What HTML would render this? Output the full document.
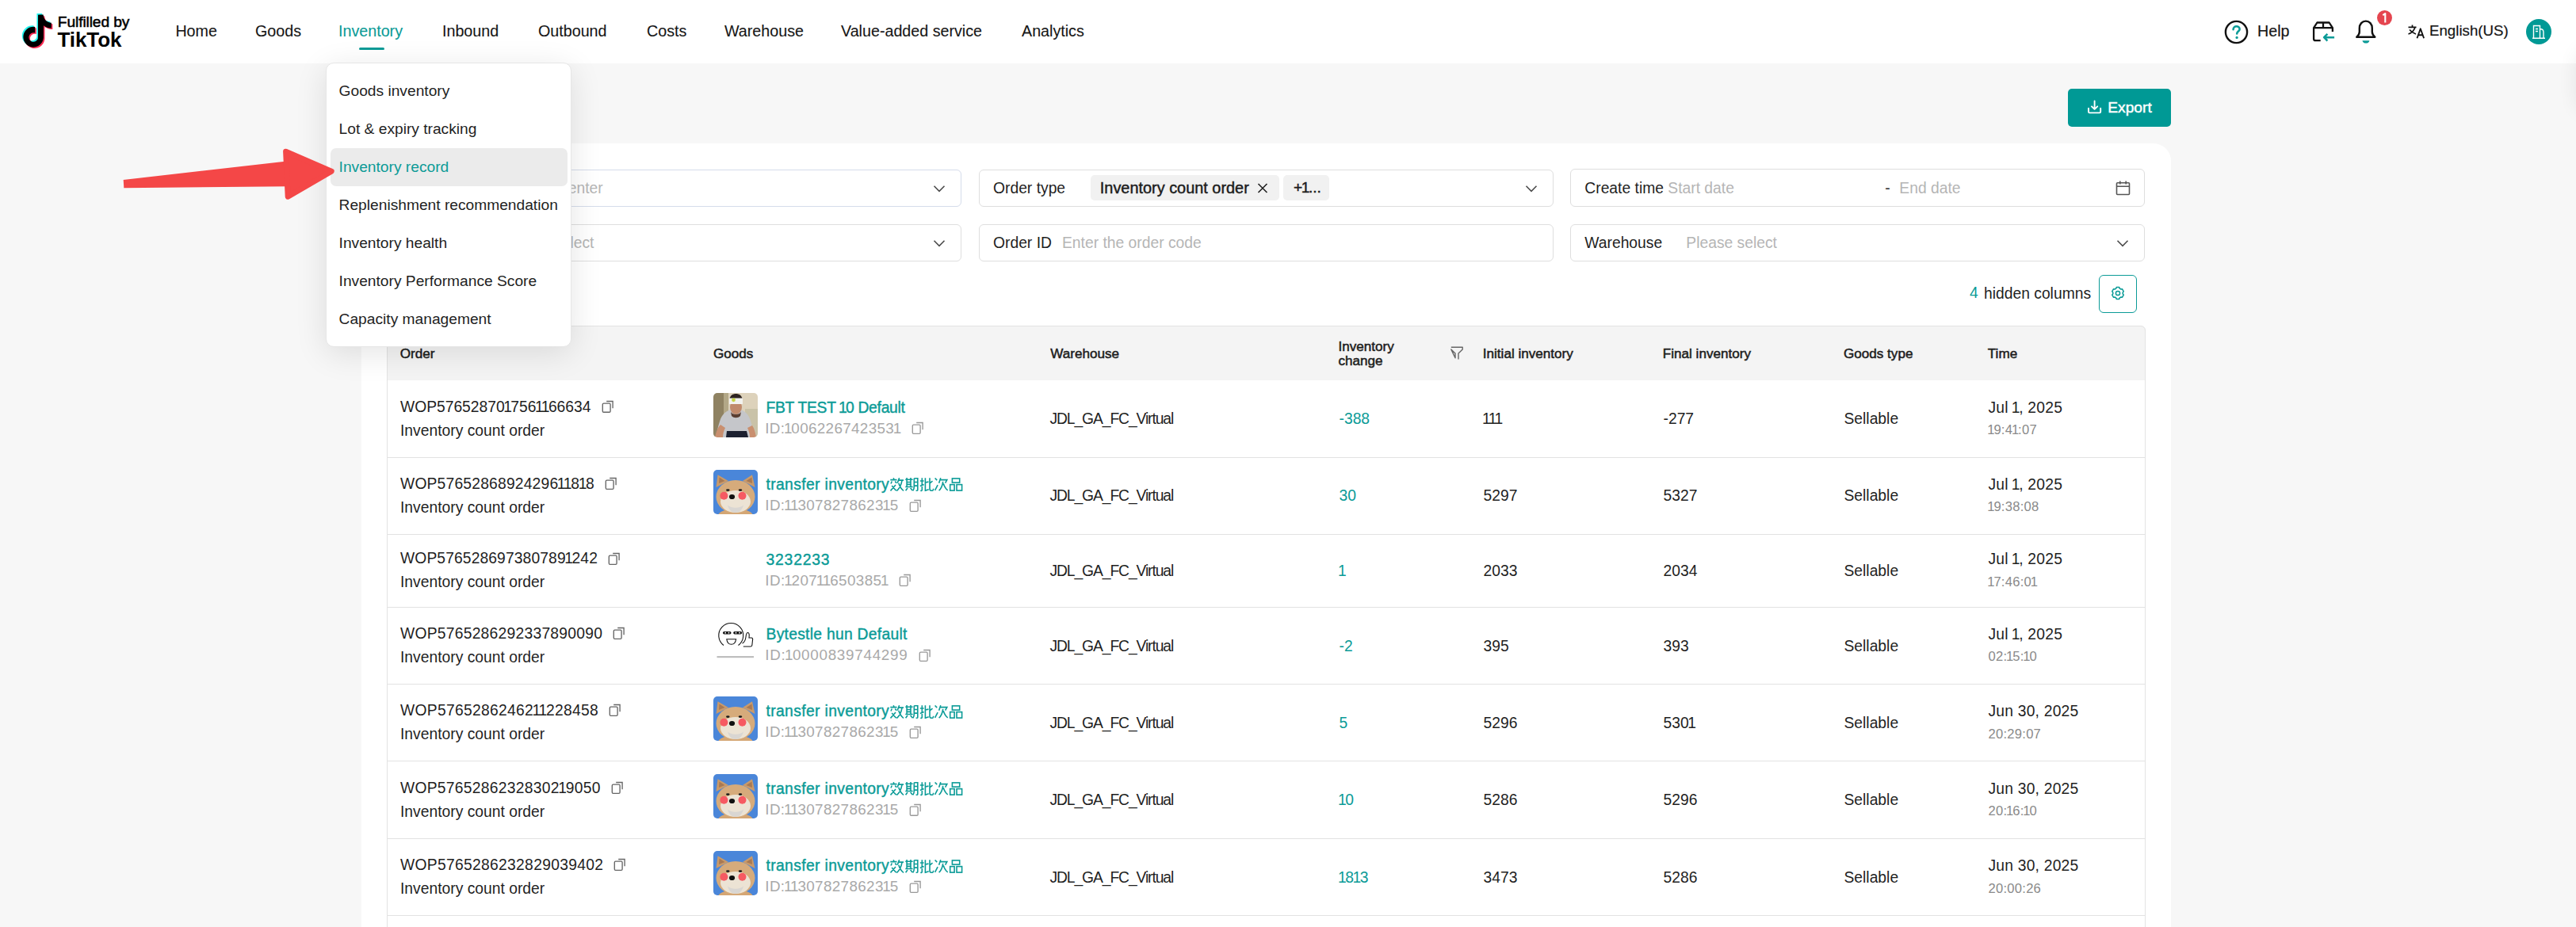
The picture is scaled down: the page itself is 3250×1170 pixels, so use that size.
<!DOCTYPE html>
<html><head><meta charset="utf-8">
<style>
*{box-sizing:border-box;margin:0;padding:0}
html,body{width:3250px;height:1170px;overflow:hidden}
body{background:#f7f7f7;font-family:"Liberation Sans",sans-serif;color:#1f1f1f;position:relative}
.a{position:absolute}
.t{position:absolute;white-space:nowrap;line-height:1}
#hdr{position:absolute;left:0;top:0;width:3250px;height:80px;background:#fff}
.nav{position:absolute;top:30.2px;font-size:19.7px;line-height:1;white-space:nowrap;color:#161616;-webkit-text-stroke:0.1px #161616}
.teal{color:#0b9b97}
#card{position:absolute;left:456px;top:181px;width:2283px;height:1200px;background:#fff;border-radius:22px}
.inp{position:absolute;height:47px;border:1.3px solid #dedede;border-radius:6px;background:#fff}
.inp .lab{position:absolute;top:0.6px;line-height:inherit;font-size:19.3px;color:#1f1f1f;white-space:nowrap}
.inp .ph{position:absolute;top:0.6px;line-height:inherit;font-size:19.3px;color:#b5b5b5;white-space:nowrap}
.chev{position:absolute;width:14px;height:9px}
#tbl{position:absolute;left:488px;top:411px;width:2219px;height:800px;border-radius:6px 6px 0 0;overflow:hidden}
#tblb{position:absolute;left:488px;top:411px;width:2219px;height:900px;border:1.3px solid #e3e3e3;border-radius:6px 6px 0 0}
#th{position:absolute;left:0;top:0;width:100%;height:69px;background:#f4f4f4}
.hd{position:absolute;top:1px;font-weight:normal;font-size:17.1px;line-height:69px;white-space:nowrap;color:#1c1c1c;-webkit-text-stroke:0.5px #1c1c1c}
.row{position:absolute;left:0;width:100%;border-bottom:1.3px solid #e2e2e2}
.c{position:absolute;white-space:nowrap;font-size:19.3px;line-height:1}
.menu{position:absolute;left:411.2px;top:78.7px;width:310px;height:359.5px;background:#fff;border:1px solid #e6e6e6;border-radius:10px;box-shadow:0 8px 40px rgba(0,0,0,0.11)}
.mi{position:absolute;left:15.4px;font-size:19.2px;line-height:1;white-space:nowrap;color:#1f1f1f}
.img{position:absolute;width:56px;height:56px;border-radius:5px;overflow:hidden}
</style></head><body>
<div id="hdr">
<svg class="a" style="left:0px;top:0px" width="80" height="70" viewBox="0 0 80 70">
<g transform="translate(26.7,18.6) scale(1.7)">
<path fill="#25f4ee" transform="translate(-0.9,-0.9)" d="M12.525.02c1.31-.02 2.61-.01 3.91-.02.08 1.530.63 3.090 1.75 4.170 1.12 1.11 2.7 1.62 4.24 1.79v4.03c-1.44-.05-2.89-.35-4.2-.97-.57-.26-1.1-.59-1.62-.93-.01 2.920.01 5.840-.02 8.750-.08 1.4-.54 2.79-1.35 3.94-1.31 1.92-3.58 3.17-5.91 3.21-1.43.08-2.86-.31-4.080-1.030-2.020-1.190-3.440-3.370-3.650-5.710-.02-.5-.03-1-.01-1.490.18-1.9 1.12-3.72 2.58-4.96 1.66-1.44 3.98-2.13 6.15-1.720.02 1.480-.04 2.960-.04 4.440-.99-.32-2.150-.23-3.020.37-.63.41-1.110 1.040-1.360 1.750-.21.51-.15 1.070-.14 1.610.24 1.640 1.820 3.020 3.500 2.870 1.120-.01 2.190-.66 2.770-1.610.19-.33.4-.67.41-1.060.1-1.790.06-3.570.07-5.360.01-4.030-.01-8.050.02-12.070z"/>
<path fill="#fe2c55" transform="translate(0.9,0.9)" d="M12.525.02c1.31-.02 2.61-.01 3.91-.02.08 1.530.63 3.090 1.75 4.170 1.12 1.11 2.7 1.62 4.24 1.79v4.03c-1.44-.05-2.89-.35-4.2-.97-.57-.26-1.1-.59-1.62-.93-.01 2.920.01 5.840-.02 8.750-.08 1.4-.54 2.79-1.35 3.94-1.31 1.92-3.58 3.17-5.91 3.21-1.43.08-2.86-.31-4.080-1.030-2.020-1.190-3.440-3.370-3.650-5.710-.02-.5-.03-1-.01-1.490.18-1.9 1.12-3.72 2.58-4.96 1.66-1.44 3.98-2.13 6.15-1.720.02 1.480-.04 2.960-.04 4.440-.99-.32-2.150-.23-3.020.37-.63.41-1.110 1.040-1.360 1.750-.21.51-.15 1.070-.14 1.610.24 1.640 1.820 3.020 3.500 2.870 1.120-.01 2.190-.66 2.770-1.610.19-.33.4-.67.41-1.060.1-1.790.06-3.570.07-5.360.01-4.030-.01-8.050.02-12.070z"/>
<path fill="#000" d="M12.525.02c1.31-.02 2.61-.01 3.91-.02.08 1.530.63 3.090 1.75 4.170 1.12 1.11 2.7 1.62 4.24 1.79v4.03c-1.44-.05-2.89-.35-4.2-.97-.57-.26-1.1-.59-1.62-.93-.01 2.920.01 5.840-.02 8.750-.08 1.4-.54 2.79-1.35 3.94-1.31 1.92-3.58 3.17-5.91 3.21-1.43.08-2.86-.31-4.080-1.030-2.020-1.190-3.440-3.370-3.650-5.710-.02-.5-.03-1-.01-1.490.18-1.9 1.12-3.72 2.58-4.96 1.66-1.44 3.98-2.13 6.150-1.720.02 1.480-.04 2.960-.04 4.440-.99-.32-2.150-.23-3.020.37-.63.41-1.110 1.040-1.360 1.750-.21.51-.15 1.070-.14 1.610.24 1.640 1.820 3.020 3.500 2.870 1.120-.01 2.190-.66 2.770-1.610.19-.33.4-.67.41-1.060.1-1.790.06-3.570.07-5.360.01-4.030-.01-8.050.02-12.070z"/>
</g></svg>
<div class="t" style="left:72.8px;top:17.6px;font-size:19.2px;color:#000;letter-spacing:-0.1px;-webkit-text-stroke:0.55px #000">Fulfilled by</div>
<div class="t" style="left:72.5px;top:37.3px;font-size:26px;font-weight:bold;color:#000;letter-spacing:-0.1px">TikTok</div>
<div class="nav" style="left:221.4px">Home</div>
<div class="nav" style="left:322px">Goods</div>
<div class="nav teal" style="left:427px;color:#0b9b97;-webkit-text-stroke:0.1px #0b9b97">Inventory</div>
<div class="a" style="left:453px;top:60px;width:32px;height:3px;border-radius:2px;background:#0b9b97"></div>
<div class="nav" style="left:558px">Inbound</div>
<div class="nav" style="left:679px">Outbound</div>
<div class="nav" style="left:816px">Costs</div>
<div class="nav" style="left:914px">Warehouse</div>
<div class="nav" style="left:1061px">Value-added service</div>
<div class="nav" style="left:1289px">Analytics</div>
<!-- right -->
<svg class="a" style="left:2805px;top:24px" width="34" height="34" viewBox="0 0 34 34">
<circle cx="16.5" cy="16.5" r="13.6" fill="none" stroke="#111" stroke-width="2.4"/>
<path d="M12.6 13.2c0-2.3 1.8-3.9 4-3.9s4 1.5 4 3.6c0 2.5-3.4 2.9-3.4 5.6" fill="none" stroke="#0b9b97" stroke-width="2.6" stroke-linecap="round"/>
<circle cx="17.1" cy="23.4" r="1.6" fill="#0b9b97"/>
</svg>
<div class="nav" style="left:2848px;top:29.6px;-webkit-text-stroke:0.2px #161616">Help</div>
<svg class="a" style="left:2915px;top:25px" width="34" height="32" viewBox="0 0 34 32">
<path d="M12.7 26.1H6.3c-1.3 0-2.2-.9-2.2-2.2V10.2L8.4 3.5H23.6L27.9 10.2V15" fill="none" stroke="#111" stroke-width="2.3" stroke-linejoin="round"/>
<path d="M4.1 10.2H27.9M16 3.5v6.7" fill="none" stroke="#111" stroke-width="2.3"/>
<path d="M30.1 22.2H17.6M21.4 17.9l-4.3 4.3 4.3 4.3" fill="none" stroke="#0b9b97" stroke-width="2.5" stroke-linejoin="round"/>
</svg>
<svg class="a" style="left:2969px;top:23px" width="32" height="34" viewBox="0 0 32 34">
<path d="M4.2 23.8c2-1.8 3.6-3.6 3.6-6.6v-4.6c0-5.2 3.4-9 8-9s8 3.8 8 9v4.6c0 3 1.6 4.8 3.6 6.6z" fill="none" stroke="#111" stroke-width="2.4" stroke-linejoin="round"/>
<path d="M11.5 28.2h8.9c-.4 2.1-2.2 3.4-4.45 3.4s-4.05-1.3-4.45-3.4z" fill="#0b9b97"/>
</svg>
<div class="a" style="left:2999px;top:12.5px;width:19px;height:19px;border-radius:50%;background:#e5454f"></div>
<svg class="a" style="left:2999px;top:12.5px" width="19" height="19" viewBox="0 0 19 19"><path d="M7.3 6.2l3-2.1v11.3" fill="none" stroke="#fff" stroke-width="2.1" stroke-linejoin="round"/></svg>
<svg class="a" style="left:3037px;top:30px" width="24" height="20" viewBox="0 0 24 20">
<path d="M1.5 4.3h10M6.5 1.5v2.8M3 7.5c2.5 3 5 4.5 8 5.5M10 4.5c-1.5 4.2-4 7-8.5 8.5" fill="none" stroke="#111" stroke-width="1.7"/>
<path d="M12.5 18.3l4.3-12 4.3 12M14 14.3h5.6" fill="none" stroke="#111" stroke-width="1.9" stroke-linejoin="round"/>
</svg>
<div class="nav" style="left:3065px;top:30px;font-size:18.7px;-webkit-text-stroke:0.2px #161616">English(US)</div>
<div class="a" style="left:3187px;top:24px;width:32px;height:32px;border-radius:50%;background:#009995"></div>
<svg class="a" style="left:3187px;top:24px" width="32" height="32" viewBox="0 0 32 32">
<path d="M9.5 24V8.5h8V24M17.5 12.5c2.5 0 4.5 1.5 4.5 4V24M8 24.3h16M12 12.5h3M12 15.5h3" fill="none" stroke="#fff" stroke-width="1.4"/>
</svg>
</div>
<div class="a" style="left:2609px;top:112px;width:130px;height:48px;border-radius:5px;background:#009995"></div>
<svg class="a" style="left:2632px;top:126px" width="21" height="20" viewBox="0 0 21 20">
<path d="M10.6 1.5v10.3M7 8.3l3.6 3.6 3.6-3.6" fill="none" stroke="#fff" stroke-width="1.9" stroke-linecap="round" stroke-linejoin="round"/>
<path d="M3 10.8v4.3c0 .8.5 1.3 1.3 1.3h12.6c.8 0 1.3-.5 1.3-1.3v-4.3" fill="none" stroke="#fff" stroke-width="1.9" stroke-linecap="round"/>
</svg>
<div class="t" style="left:2659.3px;top:120.6px;font-size:19.2px;color:#fff;line-height:30px;-webkit-text-stroke:0.45px #fff">Export</div>
<div id="card"></div>
<div class="inp" style="left:488px;top:214px;width:725px;height:47.3px;line-height:44.7px;border-color:#d5dceb"><div class="lab" style="left:16px">SKU ID</div><div class="ph" style="left:163.5px">Please enter</div></div>
<svg class="a" style="left:1177px;top:233px" width="16" height="11" viewBox="0 0 16 11"><path d="M1.5 1.8l6.5 6.5 6.5-6.5" fill="none" stroke="#4a4a4a" stroke-width="1.55"/></svg>
<div class="inp" style="left:488px;top:283px;width:725px;height:47.3px;line-height:44.7px"><div class="lab" style="left:16px">Goods type</div><div class="ph" style="left:145.8px">Please select</div></div>
<svg class="a" style="left:1177px;top:302px" width="16" height="11" viewBox="0 0 16 11"><path d="M1.5 1.8l6.5 6.5 6.5-6.5" fill="none" stroke="#4a4a4a" stroke-width="1.55"/></svg>
<div class="inp" style="left:1235px;top:214px;width:725px;height:47.3px;line-height:44.7px"><div class="lab" style="left:17px">Order type</div></div>
<div class="a" style="left:1376px;top:221px;width:238px;height:32px;border-radius:5px;background:#f1f1f1"></div>
<div class="t" style="left:1387.8px;top:221px;line-height:32px;font-size:19.9px;color:#1c1c1c;-webkit-text-stroke:0.45px #1c1c1c">Inventory count order</div>
<svg class="a" style="left:1585px;top:230px" width="16" height="15" viewBox="0 0 16 15"><path d="M2.5 2l11 11M13.5 2l-11 11" stroke="#222" stroke-width="1.6"/></svg>
<div class="a" style="left:1619px;top:221px;width:58px;height:32px;border-radius:5px;background:#f1f1f1"></div>
<div class="t" style="left:1632px;top:221px;line-height:32px;font-size:19.2px;color:#1c1c1c;-webkit-text-stroke:0.45px #1c1c1c">+<span style="margin:0 -1.5px">1</span>...</div>
<svg class="a" style="left:1924px;top:233px" width="16" height="11" viewBox="0 0 16 11"><path d="M1.5 1.8l6.5 6.5 6.5-6.5" fill="none" stroke="#4a4a4a" stroke-width="1.55"/></svg>
<div class="inp" style="left:1235px;top:283px;width:725px;height:47.3px;line-height:44.7px"><div class="lab" style="left:17px">Order ID</div><div class="ph" style="left:104px">Enter the order code</div></div>
<div class="inp" style="left:1981.3px;top:213.3px;width:725.2px;height:48px;line-height:45.4px"><div class="lab" style="left:17px">Create time</div><div class="ph" style="left:122px">Start date</div><div class="ph" style="left:396px;color:#333">-</div><div class="ph" style="left:414px">End date</div></div>
<svg class="a" style="left:2668px;top:227px" width="21" height="21" viewBox="0 0 21 21"><rect x="2.5" y="3.8" width="16" height="14.7" rx="1" fill="none" stroke="#555" stroke-width="1.6"/><path d="M2.5 8.3h16M6.8 1.5v4M14.2 1.5v4" stroke="#555" stroke-width="1.6"/></svg>
<div class="inp" style="left:1981.3px;top:283px;width:725.2px;height:47.3px;line-height:44.7px"><div class="lab" style="left:17px">Warehouse</div><div class="ph" style="left:145px">Please select</div></div>
<svg class="a" style="left:2670px;top:302px" width="16" height="11" viewBox="0 0 16 11"><path d="M1.5 1.8l6.5 6.5 6.5-6.5" fill="none" stroke="#4a4a4a" stroke-width="1.55"/></svg>
<div class="t" style="left:2485px;top:360.3px;font-size:19.3px;color:#0b9b97">4</div>
<div class="t" style="left:2503px;top:360.5px;font-size:19.3px;color:#1f1f1f">hidden columns</div>
<div class="a" style="left:2648px;top:347px;width:48px;height:48px;border:1.6px solid #0b9b97;border-radius:6px"></div>
<svg class="a" style="left:2660.7px;top:359.4px" width="22" height="22" viewBox="0 0 22 22"><path d="M9.29 3.59 L12.71 3.59 L13.36 5.16 L14.88 6.04 L16.56 5.82 L18.27 8.78 L17.24 10.12 L17.24 11.88 L18.27 13.22 L16.56 16.18 L14.88 15.96 L13.36 16.84 L12.71 18.41 L9.29 18.41 L8.64 16.84 L7.12 15.96 L5.44 16.18 L3.73 13.22 L4.76 11.88 L4.76 10.12 L3.73 8.78 L5.44 5.82 L7.12 6.04 L8.64 5.16Z" fill="none" stroke="#0b9b97" stroke-width="1.55" stroke-linejoin="round"/><circle cx="11" cy="11" r="2.6" fill="none" stroke="#0b9b97" stroke-width="1.5"/></svg>

<div id="tbl">
<div id="th">
<div class="hd" style="left:16.7px">Order</div>
<div class="hd" style="left:412px">Goods</div>
<div class="hd" style="left:837.3px">Warehouse</div>
<div class="hd" style="left:1200.5px;line-height:17.8px;top:18.2px">Inventory<br>change</div>
<svg class="a" style="left:1339px;top:24.5px" width="22" height="20" viewBox="0 0 22 20"><path d="M3.8 2.3h14.4v2.6l-5.2 5v7.6M9 15.8v-5.9l-5.2-5z" fill="none" stroke="#666" stroke-width="1.4" stroke-linejoin="round"/></svg>
<div class="hd" style="left:1382.8px">Initial inventory</div>
<div class="hd" style="left:1609.8px">Final inventory</div>
<div class="hd" style="left:1838px">Goods type</div>
<div class="hd" style="left:2019.8px">Time</div>
</div>
<div class="row" style="top:69.0px;height:97.5px"><div class="c" style="left:17px;top:23.7px;letter-spacing:-0.02px">WOP57652870<span style="margin:0 -1.5px">1</span>756<span style="margin:0 -1.5px">1</span><span style="margin:0 -1.5px">1</span>66634<svg style="position:absolute;left:100%;margin-left:13.42px;top:1.1px" width="16" height="16" viewBox="0 0 16 16"><path d="M6.2 1.5h7.9v8.7" fill="none" stroke="#666" stroke-width="1.35"/><rect x="1.3" y="4.1" width="9.8" height="11.2" rx="1.3" fill="none" stroke="#666" stroke-width="1.35"/></svg></div><div class="c" style="left:17px;top:53.7px">Inventory count order</div><div class="c" style="left:478.5px;top:24.9px;color:#0b9b97;letter-spacing:-0.27px;-webkit-text-stroke:0.4px #0b9b97">FBT TEST <span style="margin:0 -1.5px">1</span>0 Default</div><div class="c" style="left:477.3px;top:51.9px;font-size:18.85px;letter-spacing:0.334px;color:#a9a9a9">ID:<span style="margin:0 -1.45px">1</span>006226742353<span style="margin:0 -1.45px">1</span><svg style="position:absolute;left:100%;margin-left:13.666px;top:0.6px" width="16" height="16" viewBox="0 0 16 16"><path d="M6.2 1.5h7.9v8.7" fill="none" stroke="#999" stroke-width="1.35"/><rect x="1.3" y="4.1" width="9.8" height="11.2" rx="1.3" fill="none" stroke="#999" stroke-width="1.35"/></svg></div><div class="c" style="left:836.5px;top:39.4px;letter-spacing:-1.1px">JDL_GA_FC_Virtual</div><div class="c" style="left:1201.5px;top:39.4px;color:#0b9b97">-388</div><div class="c" style="left:1383.5px;top:39.4px"><span style="margin:0 -1.5px">1</span><span style="margin:0 -1.5px">1</span><span style="margin:0 -1.5px">1</span></div><div class="c" style="left:1610.5px;top:39.4px">-277</div><div class="c" style="left:1838.5px;top:39.4px">Sellable</div><div class="c" style="left:2020.5px;top:24.6px;letter-spacing:0.2px">Jul <span style="margin:0 -1.5px">1</span>, 2025</div><div class="c" style="left:2020.5px;top:55.3px;font-size:16.6px;letter-spacing:0.25px;color:#8a8a8a"><span style="margin:0 -1.3px">1</span>9:4<span style="margin:0 -1.3px">1</span>:07</div><div class="img" style="left:411.5px;top:16.0px"><svg width="56" height="56" viewBox="0 0 56 56" style="filter:blur(0.5px)">
<rect width="56" height="56" fill="#ddd2bb"/>
<rect x="0" y="0" width="17" height="56" fill="#8f8262"/>
<rect x="13" y="0" width="6" height="56" fill="#b3a887"/>
<rect x="40" y="20" width="16" height="36" fill="#c9c2a8"/>
<path d="M4 56c0-6 2-14 4-20 3-10 8-13 14-15h12c6 2 10 5 13 14 2 6 3 14 3 21z" fill="#c5c6ca"/>
<path d="M2 56c1-5 3-12 7-16l6 4c-2 4-3 8-3 12z" fill="#c98f6f"/>
<path d="M54 56c-1-5-2-11-5-15l-6 3c2 4 3 8 3 12z" fill="#c98f6f"/>
<path d="M16 56l1-8h25l2 8z" fill="#1c2030"/>
<ellipse cx="28.5" cy="18" rx="7.5" ry="9" fill="#c08a6c"/>
<path d="M22 24c2 4 11 4 13 0l-1 5c-3 3-8 3-11 0z" fill="#5a3f33"/>
<path d="M20.5 7c1-4 4-6 8-6s7 2 8 6z" fill="#2e2420"/>
<path d="M20 6.5h17v7.5h-17z" fill="#f2f2ee"/>
<circle cx="25.5" cy="8.8" r="2.4" fill="#c7d645"/>
</svg></div></div><div class="row" style="top:166.2px;height:97.4px"><div class="c" style="left:17px;top:23.6px;letter-spacing:0.186px">WOP57652868924296<span style="margin:0 -1.5px">1</span><span style="margin:0 -1.5px">1</span>8<span style="margin:0 -1.5px">1</span>8<svg style="position:absolute;left:100%;margin-left:13.214px;top:1.1px" width="16" height="16" viewBox="0 0 16 16"><path d="M6.2 1.5h7.9v8.7" fill="none" stroke="#666" stroke-width="1.35"/><rect x="1.3" y="4.1" width="9.8" height="11.2" rx="1.3" fill="none" stroke="#666" stroke-width="1.35"/></svg></div><div class="c" style="left:17px;top:53.6px">Inventory count order</div><div class="c" style="left:478.5px;top:24.8px;color:#0b9b97;letter-spacing:0.37px;-webkit-text-stroke:0.4px #0b9b97">transfer inventory<svg style="position:absolute;left:100%;margin-left:1.0px;top:1.4px" width="92" height="18" viewBox="0 0 92 18"><g fill="none" stroke="#0b9b97" stroke-width="1.6"><path d="M4.2 0.3L4.9 2M0.3 2.6H8.5M2.3 4.5L1 7.5M6.3 4.5L8 6.8M7 9L0.5 16.5M2.2 10L7.5 16.3M11.6 0.2L9.2 6.6M10.3 3.1H17M15 3.6C14 9 12 13.5 8.2 16.5M10.8 6.8C12 11 14.5 14.5 17 16.5"/><path d="M21.1 0V11.5M26 0V11.5M19.3 2.2H28.6M21.1 5.5H26M21.1 8.4H26M19.3 11.5H28.6M22 13L19.6 16.3M25.6 13L28.5 16.3M30.3 0.7V11C30.3 13.5 29.8 15 28.9 16.3M30.3 0.7H34.8V15.2C34.8 16 34.3 16.3 33.5 16.3H32.6M30.3 5.5H34.8M30.3 10.1H34.8"/><path d="M37.8 4H42.6M40.3 0.2V15.2C40.3 16.2 39.5 16.5 38.3 16.3M37.8 10.4L42.6 8.4M44.4 0.2V16.3M44.4 6L48.5 5.1M43.6 16.4L48.7 14.8M50 0.2V14C50 15.8 50.6 16.2 52 16.2H53.5C54.3 16.2 54.5 15.5 54.6 13.8M53.5 4.2L50.2 6.8"/><path d="M56.6 0.5L59.2 3.1M56.6 15.8L60.1 9.1M63.8 0.2L61.6 6.7M62.5 2.6H71.8L69.6 6.6M66.7 4.9C66 10 64.5 13.8 61.6 16.2M67.2 7.2C68.5 11 70 14 72.8 15.8"/><rect x="78.4" y="0.9" width="9.3" height="5.2"/><rect x="75.7" y="8.6" width="5.4" height="7.5"/><rect x="84" y="8.6" width="6.6" height="7.5"/></g></svg></div><div class="c" style="left:477.3px;top:51.8px;font-size:18.85px;letter-spacing:0.359px;color:#a9a9a9">ID:<span style="margin:0 -1.45px">1</span><span style="margin:0 -1.45px">1</span>3078278623<span style="margin:0 -1.45px">1</span>5<svg style="position:absolute;left:100%;margin-left:13.641px;top:0.6px" width="16" height="16" viewBox="0 0 16 16"><path d="M6.2 1.5h7.9v8.7" fill="none" stroke="#999" stroke-width="1.35"/><rect x="1.3" y="4.1" width="9.8" height="11.2" rx="1.3" fill="none" stroke="#999" stroke-width="1.35"/></svg></div><div class="c" style="left:836.5px;top:39.3px;letter-spacing:-1.1px">JDL_GA_FC_Virtual</div><div class="c" style="left:1201.5px;top:39.3px;color:#0b9b97">30</div><div class="c" style="left:1383.5px;top:39.3px">5297</div><div class="c" style="left:1610.5px;top:39.3px">5327</div><div class="c" style="left:1838.5px;top:39.3px">Sellable</div><div class="c" style="left:2020.5px;top:24.5px;letter-spacing:0.2px">Jul <span style="margin:0 -1.5px">1</span>, 2025</div><div class="c" style="left:2020.5px;top:55.2px;font-size:16.6px;letter-spacing:0.25px;color:#8a8a8a"><span style="margin:0 -1.3px">1</span>9:38:08</div><div class="img" style="left:411.5px;top:15.9px"><svg width="56" height="56" viewBox="0 0 56 56" style="filter:blur(0.4px)">
<rect width="56" height="56" fill="#4a86d9"/>
<path d="M3.5 22L5.5 6.3L19 14z M52.5 22L49 6.3L37 14z" fill="#c99a6a"/>
<path d="M7 17L7.5 9.5L14.5 14z M49 17L48.5 9.5L41.5 14z" fill="#8c5e3f" opacity=".55"/>
<ellipse cx="28" cy="58" rx="22" ry="9" fill="#d4a674"/>
<ellipse cx="28" cy="34" rx="24.5" ry="21" fill="#d6ab7b"/>
<ellipse cx="28" cy="40" rx="19" ry="14" fill="#ece3d4"/>
<path d="M18 44c3 5 17 5 20 0-1 6-5 10-10 10s-9-4-10-10z" fill="#d9d6d2"/>
<ellipse cx="18.3" cy="25.6" rx="2.3" ry="1.3" fill="#1a1a1a"/>
<ellipse cx="34" cy="25.6" rx="2.3" ry="1.3" fill="#1a1a1a"/>
<circle cx="13.4" cy="32.8" r="5" fill="#f65a62"/>
<circle cx="36.5" cy="32.8" r="5" fill="#f65a62"/>
<ellipse cx="23.5" cy="34" rx="3.6" ry="3.1" fill="#111"/>
</svg></div></div><div class="row" style="top:263.3px;height:92.4px"><div class="c" style="left:17px;top:21.2px;letter-spacing:0.1px">WOP576528697380789<span style="margin:0 -1.5px">1</span>242<svg style="position:absolute;left:100%;margin-left:13.3px;top:1.1px" width="16" height="16" viewBox="0 0 16 16"><path d="M6.2 1.5h7.9v8.7" fill="none" stroke="#666" stroke-width="1.35"/><rect x="1.3" y="4.1" width="9.8" height="11.2" rx="1.3" fill="none" stroke="#666" stroke-width="1.35"/></svg></div><div class="c" style="left:17px;top:51.2px">Inventory count order</div><div class="c" style="left:478.5px;top:22.4px;color:#0b9b97;letter-spacing:0.82px;-webkit-text-stroke:0.4px #0b9b97">3232233</div><div class="c" style="left:477.3px;top:49.4px;font-size:18.85px;letter-spacing:0.393px;color:#a9a9a9">ID:<span style="margin:0 -1.45px">1</span>207<span style="margin:0 -1.45px">1</span><span style="margin:0 -1.45px">1</span>650385<span style="margin:0 -1.45px">1</span><svg style="position:absolute;left:100%;margin-left:13.607px;top:0.6px" width="16" height="16" viewBox="0 0 16 16"><path d="M6.2 1.5h7.9v8.7" fill="none" stroke="#999" stroke-width="1.35"/><rect x="1.3" y="4.1" width="9.8" height="11.2" rx="1.3" fill="none" stroke="#999" stroke-width="1.35"/></svg></div><div class="c" style="left:836.5px;top:36.9px;letter-spacing:-1.1px">JDL_GA_FC_Virtual</div><div class="c" style="left:1201.5px;top:36.9px;color:#0b9b97"><span style="margin:0 -1.5px">1</span></div><div class="c" style="left:1383.5px;top:36.9px">2033</div><div class="c" style="left:1610.5px;top:36.9px">2034</div><div class="c" style="left:1838.5px;top:36.9px">Sellable</div><div class="c" style="left:2020.5px;top:22.1px;letter-spacing:0.2px">Jul <span style="margin:0 -1.5px">1</span>, 2025</div><div class="c" style="left:2020.5px;top:52.8px;font-size:16.6px;letter-spacing:0.25px;color:#8a8a8a"><span style="margin:0 -1.3px">1</span>7:46:0<span style="margin:0 -1.3px">1</span></div></div><div class="row" style="top:355.4px;height:97.2px"><div class="c" style="left:17px;top:23.5px;letter-spacing:0.243px">WOP5765286292337890090<svg style="position:absolute;left:100%;margin-left:13.157px;top:1.1px" width="16" height="16" viewBox="0 0 16 16"><path d="M6.2 1.5h7.9v8.7" fill="none" stroke="#666" stroke-width="1.35"/><rect x="1.3" y="4.1" width="9.8" height="11.2" rx="1.3" fill="none" stroke="#666" stroke-width="1.35"/></svg></div><div class="c" style="left:17px;top:53.5px">Inventory count order</div><div class="c" style="left:478.5px;top:24.7px;color:#0b9b97;letter-spacing:0.28px;-webkit-text-stroke:0.4px #0b9b97">Bytestle hun Default</div><div class="c" style="left:477.3px;top:51.7px;font-size:18.85px;letter-spacing:0.72px;color:#a9a9a9">ID:<span style="margin:0 -1.45px">1</span>0000839744299<svg style="position:absolute;left:100%;margin-left:13.28px;top:0.6px" width="16" height="16" viewBox="0 0 16 16"><path d="M6.2 1.5h7.9v8.7" fill="none" stroke="#999" stroke-width="1.35"/><rect x="1.3" y="4.1" width="9.8" height="11.2" rx="1.3" fill="none" stroke="#999" stroke-width="1.35"/></svg></div><div class="c" style="left:836.5px;top:39.2px;letter-spacing:-1.1px">JDL_GA_FC_Virtual</div><div class="c" style="left:1201.5px;top:39.2px;color:#0b9b97">-2</div><div class="c" style="left:1383.5px;top:39.2px">395</div><div class="c" style="left:1610.5px;top:39.2px">393</div><div class="c" style="left:1838.5px;top:39.2px">Sellable</div><div class="c" style="left:2020.5px;top:24.4px;letter-spacing:0.2px">Jul <span style="margin:0 -1.5px">1</span>, 2025</div><div class="c" style="left:2020.5px;top:55.1px;font-size:16.6px;letter-spacing:0.25px;color:#8a8a8a">02:<span style="margin:0 -1.3px">1</span>5:<span style="margin:0 -1.3px">1</span>0</div><div class="img" style="left:411.5px;top:15.8px"><svg width="56" height="56" viewBox="0 0 56 56">
<rect width="56" height="56" fill="#fff"/>
<path d="M13 32.5A15.5 15.5 0 1 1 31.5 32.5" fill="none" stroke="#111" stroke-width="1.1"/>
<rect x="12" y="15" width="10.5" height="3.4" rx="1.7" fill="#111"/>
<rect x="25.2" y="15" width="10.9" height="3.4" rx="1.7" fill="#111"/>
<circle cx="15.2" cy="16.7" r=".9" fill="#fff"/><circle cx="19.5" cy="16.7" r=".9" fill="#fff"/>
<circle cx="28.5" cy="16.7" r=".9" fill="#fff"/><circle cx="33" cy="16.7" r=".9" fill="#fff"/>
<path d="M16.8 24.8h11.8c-.5 4-2.8 6.5-5.9 6.5s-5.4-2.5-5.9-6.5z" fill="none" stroke="#111" stroke-width="1.1"/>
<path d="M36.5 30c2-1 4-4 4.5-8 .3-3 1-5.5 2.5-5.5 1.8 0 2 3 1.5 6.5h3c1.5 0 2 1.5 1.5 3-.3 3-.5 5-.7 6.5-.2 1-1 1.5-2 1.5h-9" fill="none" stroke="#111" stroke-width="1.1"/>
<rect x="4.5" y="46" width="46.5" height="2.2" fill="#888" opacity=".55"/>
</svg></div></div><div class="row" style="top:452.3px;height:97.8px"><div class="c" style="left:17px;top:23.9px;letter-spacing:0.276px">WOP57652862462<span style="margin:0 -1.5px">1</span><span style="margin:0 -1.5px">1</span>228458<svg style="position:absolute;left:100%;margin-left:13.124px;top:1.1px" width="16" height="16" viewBox="0 0 16 16"><path d="M6.2 1.5h7.9v8.7" fill="none" stroke="#666" stroke-width="1.35"/><rect x="1.3" y="4.1" width="9.8" height="11.2" rx="1.3" fill="none" stroke="#666" stroke-width="1.35"/></svg></div><div class="c" style="left:17px;top:53.9px">Inventory count order</div><div class="c" style="left:478.5px;top:25.1px;color:#0b9b97;letter-spacing:0.37px;-webkit-text-stroke:0.4px #0b9b97">transfer inventory<svg style="position:absolute;left:100%;margin-left:1.0px;top:1.4px" width="92" height="18" viewBox="0 0 92 18"><g fill="none" stroke="#0b9b97" stroke-width="1.6"><path d="M4.2 0.3L4.9 2M0.3 2.6H8.5M2.3 4.5L1 7.5M6.3 4.5L8 6.8M7 9L0.5 16.5M2.2 10L7.5 16.3M11.6 0.2L9.2 6.6M10.3 3.1H17M15 3.6C14 9 12 13.5 8.2 16.5M10.8 6.8C12 11 14.5 14.5 17 16.5"/><path d="M21.1 0V11.5M26 0V11.5M19.3 2.2H28.6M21.1 5.5H26M21.1 8.4H26M19.3 11.5H28.6M22 13L19.6 16.3M25.6 13L28.5 16.3M30.3 0.7V11C30.3 13.5 29.8 15 28.9 16.3M30.3 0.7H34.8V15.2C34.8 16 34.3 16.3 33.5 16.3H32.6M30.3 5.5H34.8M30.3 10.1H34.8"/><path d="M37.8 4H42.6M40.3 0.2V15.2C40.3 16.2 39.5 16.5 38.3 16.3M37.8 10.4L42.6 8.4M44.4 0.2V16.3M44.4 6L48.5 5.1M43.6 16.4L48.7 14.8M50 0.2V14C50 15.8 50.6 16.2 52 16.2H53.5C54.3 16.2 54.5 15.5 54.6 13.8M53.5 4.2L50.2 6.8"/><path d="M56.6 0.5L59.2 3.1M56.6 15.8L60.1 9.1M63.8 0.2L61.6 6.7M62.5 2.6H71.8L69.6 6.6M66.7 4.9C66 10 64.5 13.8 61.6 16.2M67.2 7.2C68.5 11 70 14 72.8 15.8"/><rect x="78.4" y="0.9" width="9.3" height="5.2"/><rect x="75.7" y="8.6" width="5.4" height="7.5"/><rect x="84" y="8.6" width="6.6" height="7.5"/></g></svg></div><div class="c" style="left:477.3px;top:52.0px;font-size:18.85px;letter-spacing:0.359px;color:#a9a9a9">ID:<span style="margin:0 -1.45px">1</span><span style="margin:0 -1.45px">1</span>3078278623<span style="margin:0 -1.45px">1</span>5<svg style="position:absolute;left:100%;margin-left:13.641px;top:0.6px" width="16" height="16" viewBox="0 0 16 16"><path d="M6.2 1.5h7.9v8.7" fill="none" stroke="#999" stroke-width="1.35"/><rect x="1.3" y="4.1" width="9.8" height="11.2" rx="1.3" fill="none" stroke="#999" stroke-width="1.35"/></svg></div><div class="c" style="left:836.5px;top:39.5px;letter-spacing:-1.1px">JDL_GA_FC_Virtual</div><div class="c" style="left:1201.5px;top:39.5px;color:#0b9b97">5</div><div class="c" style="left:1383.5px;top:39.5px">5296</div><div class="c" style="left:1610.5px;top:39.5px">530<span style="margin:0 -1.5px">1</span></div><div class="c" style="left:1838.5px;top:39.5px">Sellable</div><div class="c" style="left:2020.5px;top:24.8px;letter-spacing:0.2px">Jun 30, 2025</div><div class="c" style="left:2020.5px;top:55.5px;font-size:16.6px;letter-spacing:0.25px;color:#8a8a8a">20:29:07</div><div class="img" style="left:411.5px;top:16.1px"><svg width="56" height="56" viewBox="0 0 56 56" style="filter:blur(0.4px)">
<rect width="56" height="56" fill="#4a86d9"/>
<path d="M3.5 22L5.5 6.3L19 14z M52.5 22L49 6.3L37 14z" fill="#c99a6a"/>
<path d="M7 17L7.5 9.5L14.5 14z M49 17L48.5 9.5L41.5 14z" fill="#8c5e3f" opacity=".55"/>
<ellipse cx="28" cy="58" rx="22" ry="9" fill="#d4a674"/>
<ellipse cx="28" cy="34" rx="24.5" ry="21" fill="#d6ab7b"/>
<ellipse cx="28" cy="40" rx="19" ry="14" fill="#ece3d4"/>
<path d="M18 44c3 5 17 5 20 0-1 6-5 10-10 10s-9-4-10-10z" fill="#d9d6d2"/>
<ellipse cx="18.3" cy="25.6" rx="2.3" ry="1.3" fill="#1a1a1a"/>
<ellipse cx="34" cy="25.6" rx="2.3" ry="1.3" fill="#1a1a1a"/>
<circle cx="13.4" cy="32.8" r="5" fill="#f65a62"/>
<circle cx="36.5" cy="32.8" r="5" fill="#f65a62"/>
<ellipse cx="23.5" cy="34" rx="3.6" ry="3.1" fill="#111"/>
</svg></div></div><div class="row" style="top:549.8px;height:98.0px"><div class="c" style="left:17px;top:24.0px;letter-spacing:0.271px">WOP57652862328302<span style="margin:0 -1.5px">1</span>9050<svg style="position:absolute;left:100%;margin-left:13.129px;top:1.1px" width="16" height="16" viewBox="0 0 16 16"><path d="M6.2 1.5h7.9v8.7" fill="none" stroke="#666" stroke-width="1.35"/><rect x="1.3" y="4.1" width="9.8" height="11.2" rx="1.3" fill="none" stroke="#666" stroke-width="1.35"/></svg></div><div class="c" style="left:17px;top:54.0px">Inventory count order</div><div class="c" style="left:478.5px;top:25.2px;color:#0b9b97;letter-spacing:0.37px;-webkit-text-stroke:0.4px #0b9b97">transfer inventory<svg style="position:absolute;left:100%;margin-left:1.0px;top:1.4px" width="92" height="18" viewBox="0 0 92 18"><g fill="none" stroke="#0b9b97" stroke-width="1.6"><path d="M4.2 0.3L4.9 2M0.3 2.6H8.5M2.3 4.5L1 7.5M6.3 4.5L8 6.8M7 9L0.5 16.5M2.2 10L7.5 16.3M11.6 0.2L9.2 6.6M10.3 3.1H17M15 3.6C14 9 12 13.5 8.2 16.5M10.8 6.8C12 11 14.5 14.5 17 16.5"/><path d="M21.1 0V11.5M26 0V11.5M19.3 2.2H28.6M21.1 5.5H26M21.1 8.4H26M19.3 11.5H28.6M22 13L19.6 16.3M25.6 13L28.5 16.3M30.3 0.7V11C30.3 13.5 29.8 15 28.9 16.3M30.3 0.7H34.8V15.2C34.8 16 34.3 16.3 33.5 16.3H32.6M30.3 5.5H34.8M30.3 10.1H34.8"/><path d="M37.8 4H42.6M40.3 0.2V15.2C40.3 16.2 39.5 16.5 38.3 16.3M37.8 10.4L42.6 8.4M44.4 0.2V16.3M44.4 6L48.5 5.1M43.6 16.4L48.7 14.8M50 0.2V14C50 15.8 50.6 16.2 52 16.2H53.5C54.3 16.2 54.5 15.5 54.6 13.8M53.5 4.2L50.2 6.8"/><path d="M56.6 0.5L59.2 3.1M56.6 15.8L60.1 9.1M63.8 0.2L61.6 6.7M62.5 2.6H71.8L69.6 6.6M66.7 4.9C66 10 64.5 13.8 61.6 16.2M67.2 7.2C68.5 11 70 14 72.8 15.8"/><rect x="78.4" y="0.9" width="9.3" height="5.2"/><rect x="75.7" y="8.6" width="5.4" height="7.5"/><rect x="84" y="8.6" width="6.6" height="7.5"/></g></svg></div><div class="c" style="left:477.3px;top:52.2px;font-size:18.85px;letter-spacing:0.359px;color:#a9a9a9">ID:<span style="margin:0 -1.45px">1</span><span style="margin:0 -1.45px">1</span>3078278623<span style="margin:0 -1.45px">1</span>5<svg style="position:absolute;left:100%;margin-left:13.641px;top:0.6px" width="16" height="16" viewBox="0 0 16 16"><path d="M6.2 1.5h7.9v8.7" fill="none" stroke="#999" stroke-width="1.35"/><rect x="1.3" y="4.1" width="9.8" height="11.2" rx="1.3" fill="none" stroke="#999" stroke-width="1.35"/></svg></div><div class="c" style="left:836.5px;top:39.7px;letter-spacing:-1.1px">JDL_GA_FC_Virtual</div><div class="c" style="left:1201.5px;top:39.7px;color:#0b9b97"><span style="margin:0 -1.5px">1</span>0</div><div class="c" style="left:1383.5px;top:39.7px">5286</div><div class="c" style="left:1610.5px;top:39.7px">5296</div><div class="c" style="left:1838.5px;top:39.7px">Sellable</div><div class="c" style="left:2020.5px;top:24.9px;letter-spacing:0.2px">Jun 30, 2025</div><div class="c" style="left:2020.5px;top:55.6px;font-size:16.6px;letter-spacing:0.25px;color:#8a8a8a">20:<span style="margin:0 -1.3px">1</span>6:<span style="margin:0 -1.3px">1</span>0</div><div class="img" style="left:411.5px;top:16.3px"><svg width="56" height="56" viewBox="0 0 56 56" style="filter:blur(0.4px)">
<rect width="56" height="56" fill="#4a86d9"/>
<path d="M3.5 22L5.5 6.3L19 14z M52.5 22L49 6.3L37 14z" fill="#c99a6a"/>
<path d="M7 17L7.5 9.5L14.5 14z M49 17L48.5 9.5L41.5 14z" fill="#8c5e3f" opacity=".55"/>
<ellipse cx="28" cy="58" rx="22" ry="9" fill="#d4a674"/>
<ellipse cx="28" cy="34" rx="24.5" ry="21" fill="#d6ab7b"/>
<ellipse cx="28" cy="40" rx="19" ry="14" fill="#ece3d4"/>
<path d="M18 44c3 5 17 5 20 0-1 6-5 10-10 10s-9-4-10-10z" fill="#d9d6d2"/>
<ellipse cx="18.3" cy="25.6" rx="2.3" ry="1.3" fill="#1a1a1a"/>
<ellipse cx="34" cy="25.6" rx="2.3" ry="1.3" fill="#1a1a1a"/>
<circle cx="13.4" cy="32.8" r="5" fill="#f65a62"/>
<circle cx="36.5" cy="32.8" r="5" fill="#f65a62"/>
<ellipse cx="23.5" cy="34" rx="3.6" ry="3.1" fill="#111"/>
</svg></div></div><div class="row" style="top:647.5px;height:97.4px"><div class="c" style="left:17px;top:23.6px;letter-spacing:0.295px">WOP5765286232829039402<svg style="position:absolute;left:100%;margin-left:13.105px;top:1.1px" width="16" height="16" viewBox="0 0 16 16"><path d="M6.2 1.5h7.9v8.7" fill="none" stroke="#666" stroke-width="1.35"/><rect x="1.3" y="4.1" width="9.8" height="11.2" rx="1.3" fill="none" stroke="#666" stroke-width="1.35"/></svg></div><div class="c" style="left:17px;top:53.6px">Inventory count order</div><div class="c" style="left:478.5px;top:24.8px;color:#0b9b97;letter-spacing:0.37px;-webkit-text-stroke:0.4px #0b9b97">transfer inventory<svg style="position:absolute;left:100%;margin-left:1.0px;top:1.4px" width="92" height="18" viewBox="0 0 92 18"><g fill="none" stroke="#0b9b97" stroke-width="1.6"><path d="M4.2 0.3L4.9 2M0.3 2.6H8.5M2.3 4.5L1 7.5M6.3 4.5L8 6.8M7 9L0.5 16.5M2.2 10L7.5 16.3M11.6 0.2L9.2 6.6M10.3 3.1H17M15 3.6C14 9 12 13.5 8.2 16.5M10.8 6.8C12 11 14.5 14.5 17 16.5"/><path d="M21.1 0V11.5M26 0V11.5M19.3 2.2H28.6M21.1 5.5H26M21.1 8.4H26M19.3 11.5H28.6M22 13L19.6 16.3M25.6 13L28.5 16.3M30.3 0.7V11C30.3 13.5 29.8 15 28.9 16.3M30.3 0.7H34.8V15.2C34.8 16 34.3 16.3 33.5 16.3H32.6M30.3 5.5H34.8M30.3 10.1H34.8"/><path d="M37.8 4H42.6M40.3 0.2V15.2C40.3 16.2 39.5 16.5 38.3 16.3M37.8 10.4L42.6 8.4M44.4 0.2V16.3M44.4 6L48.5 5.1M43.6 16.4L48.7 14.8M50 0.2V14C50 15.8 50.6 16.2 52 16.2H53.5C54.3 16.2 54.5 15.5 54.6 13.8M53.5 4.2L50.2 6.8"/><path d="M56.6 0.5L59.2 3.1M56.6 15.8L60.1 9.1M63.8 0.2L61.6 6.7M62.5 2.6H71.8L69.6 6.6M66.7 4.9C66 10 64.5 13.8 61.6 16.2M67.2 7.2C68.5 11 70 14 72.8 15.8"/><rect x="78.4" y="0.9" width="9.3" height="5.2"/><rect x="75.7" y="8.6" width="5.4" height="7.5"/><rect x="84" y="8.6" width="6.6" height="7.5"/></g></svg></div><div class="c" style="left:477.3px;top:51.8px;font-size:18.85px;letter-spacing:0.359px;color:#a9a9a9">ID:<span style="margin:0 -1.45px">1</span><span style="margin:0 -1.45px">1</span>3078278623<span style="margin:0 -1.45px">1</span>5<svg style="position:absolute;left:100%;margin-left:13.641px;top:0.6px" width="16" height="16" viewBox="0 0 16 16"><path d="M6.2 1.5h7.9v8.7" fill="none" stroke="#999" stroke-width="1.35"/><rect x="1.3" y="4.1" width="9.8" height="11.2" rx="1.3" fill="none" stroke="#999" stroke-width="1.35"/></svg></div><div class="c" style="left:836.5px;top:39.3px;letter-spacing:-1.1px">JDL_GA_FC_Virtual</div><div class="c" style="left:1201.5px;top:39.3px;color:#0b9b97"><span style="margin:0 -1.5px">1</span>8<span style="margin:0 -1.5px">1</span>3</div><div class="c" style="left:1383.5px;top:39.3px">3473</div><div class="c" style="left:1610.5px;top:39.3px">5286</div><div class="c" style="left:1838.5px;top:39.3px">Sellable</div><div class="c" style="left:2020.5px;top:24.5px;letter-spacing:0.2px">Jun 30, 2025</div><div class="c" style="left:2020.5px;top:55.2px;font-size:16.6px;letter-spacing:0.25px;color:#8a8a8a">20:00:26</div><div class="img" style="left:411.5px;top:15.9px"><svg width="56" height="56" viewBox="0 0 56 56" style="filter:blur(0.4px)">
<rect width="56" height="56" fill="#4a86d9"/>
<path d="M3.5 22L5.5 6.3L19 14z M52.5 22L49 6.3L37 14z" fill="#c99a6a"/>
<path d="M7 17L7.5 9.5L14.5 14z M49 17L48.5 9.5L41.5 14z" fill="#8c5e3f" opacity=".55"/>
<ellipse cx="28" cy="58" rx="22" ry="9" fill="#d4a674"/>
<ellipse cx="28" cy="34" rx="24.5" ry="21" fill="#d6ab7b"/>
<ellipse cx="28" cy="40" rx="19" ry="14" fill="#ece3d4"/>
<path d="M18 44c3 5 17 5 20 0-1 6-5 10-10 10s-9-4-10-10z" fill="#d9d6d2"/>
<ellipse cx="18.3" cy="25.6" rx="2.3" ry="1.3" fill="#1a1a1a"/>
<ellipse cx="34" cy="25.6" rx="2.3" ry="1.3" fill="#1a1a1a"/>
<circle cx="13.4" cy="32.8" r="5" fill="#f65a62"/>
<circle cx="36.5" cy="32.8" r="5" fill="#f65a62"/>
<ellipse cx="23.5" cy="34" rx="3.6" ry="3.1" fill="#111"/>
</svg></div></div></div>
<div id="tblb"></div>
<div class="menu"><div class="a" style="left:4.8px;top:107.2px;width:299px;height:48px;border-radius:7px;background:#ebebeb"></div><div class="mi" style="top:25.5px;color:#1f1f1f">Goods inventory</div><div class="mi" style="top:73.5px;color:#1f1f1f">Lot &amp; expiry tracking</div><div class="mi" style="top:121.5px;color:#0b9b97">Inventory record</div><div class="mi" style="top:169.5px;color:#1f1f1f">Replenishment recommendation</div><div class="mi" style="top:217.5px;color:#1f1f1f">Inventory health</div><div class="mi" style="top:265.5px;color:#1f1f1f">Inventory Performance Score</div><div class="mi" style="top:313.5px;color:#1f1f1f">Capacity management</div></div>
<svg class="a" style="left:0;top:0" width="460" height="300" viewBox="0 0 460 300"><path d="M155.7 227L364 203.3L365 235.2L156.3 237.2Z" fill="#f44747"/><path d="M360.6 191.2L418.2 216.2L363.2 248.2Z" fill="#f44747" stroke="#f44747" stroke-width="7" stroke-linejoin="round"/></svg>
<div class="a" style="left:3252px;top:62px;width:40px;height:80px;border-radius:20px;background:#fff;box-shadow:0 0 26px rgba(0,0,0,0.09)"></div>
</body></html>
